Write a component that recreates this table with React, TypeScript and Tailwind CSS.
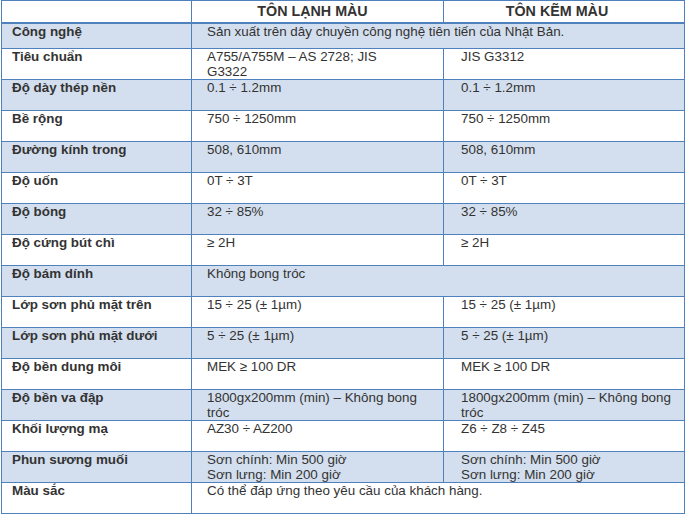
import React from 'react';

type Row = {
  label: string;
  a: React.ReactNode;
  b?: React.ReactNode;
  h?: string;
};

const rows: Row[] = [
  { label: 'Công nghệ', a: 'Sản xuất trên dây chuyền công nghệ tiên tiến của Nhật Bản.', h: 'h-[26px]' },
  { label: 'Tiêu chuẩn', a: <>A755/A755M – AS 2728; JIS<br />G3322</>, b: 'JIS G3312' },
  { label: 'Độ dày thép nền', a: '0.1 ÷ 1.2mm', b: '0.1 ÷ 1.2mm' },
  { label: 'Bề rộng', a: '750 ÷ 1250mm', b: '750 ÷ 1250mm' },
  { label: 'Đường kính trong', a: '508, 610mm', b: '508, 610mm' },
  { label: 'Độ uốn', a: '0T ÷ 3T', b: '0T ÷ 3T' },
  { label: 'Độ bóng', a: '32 ÷ 85%', b: '32 ÷ 85%' },
  { label: 'Độ cứng bút chì', a: '≥ 2H', b: '≥ 2H' },
  { label: 'Độ bám dính', a: 'Không bong tróc' },
  { label: 'Lớp sơn phủ mặt trên', a: '15 ÷ 25 (± 1µm)', b: '15 ÷ 25 (± 1µm)' },
  { label: 'Lớp sơn phủ mặt dưới', a: '5 ÷ 25 (± 1µm)', b: '5 ÷ 25 (± 1µm)' },
  { label: 'Độ bền dung môi', a: 'MEK ≥ 100 DR', b: 'MEK ≥ 100 DR' },
  { label: 'Độ bền va đập', a: '1800gx200mm (min) – Không bong tróc', b: '1800gx200mm (min) – Không bong tróc' },
  { label: 'Khối lượng mạ', a: 'AZ30 ÷ AZ200', b: 'Z6 ÷ Z8 ÷ Z45' },
  { label: 'Phun sương muối', a: <>Sơn chính: Min 500 giờ<br />Sơn lưng: Min 200 giờ</>, b: <>Sơn chính: Min 500 giờ<br />Sơn lưng: Min 200 giờ</> },
  { label: 'Màu sắc', a: 'Có thể đáp ứng theo yêu cầu của khách hàng.' },
];

const App: React.FC = () => {
  return (
    <div className="w-[686px] h-[517px] bg-white pl-px text-[13.4px] leading-[15px] text-[#333333] font-['Liberation_Sans',Arial,sans-serif]">
      <table className="w-[683px] table-fixed border-collapse border border-[#4f81bd]">
        <colgroup>
          <col className="w-[190px]" />
          <col className="w-[252px]" />
          <col className="w-[241px]" />
        </colgroup>
        <thead>
          <tr className="h-[22px] border-b-2 border-[#4f81bd]">
            <th className="border border-[#4f81bd] p-0"></th>
            <th className="border border-[#4f81bd] p-0 pr-[10px] text-[14.3px] font-bold text-center align-middle">TÔN LẠNH MÀU</th>
            <th className="border border-[#4f81bd] p-0 pr-[14px] text-[14.3px] font-bold text-center align-middle">TÔN KẼM MÀU</th>
          </tr>
        </thead>
        <tbody>
          {rows.map((r, i) => (
            <tr key={r.label} className={`${r.h ?? 'h-[31px]'} ${i % 2 === 0 ? 'bg-[#d3dfee]' : 'bg-white'}`}>
              <td className="border border-[#4f81bd] align-top pl-[10px] pt-0 font-bold">{r.label}</td>
              {r.b === undefined ? (
                <td colSpan={2} className="border border-[#4f81bd] align-top pl-[15px] pt-0">{r.a}</td>
              ) : (
                <>
                  <td className="border border-[#4f81bd] align-top pl-[15px] pr-2 pt-0">{r.a}</td>
                  <td className="border border-[#4f81bd] align-top pl-[17px] pr-2 pt-0">{r.b}</td>
                </>
              )}
            </tr>
          ))}
        </tbody>
      </table>
    </div>
  );
};

export default App;
